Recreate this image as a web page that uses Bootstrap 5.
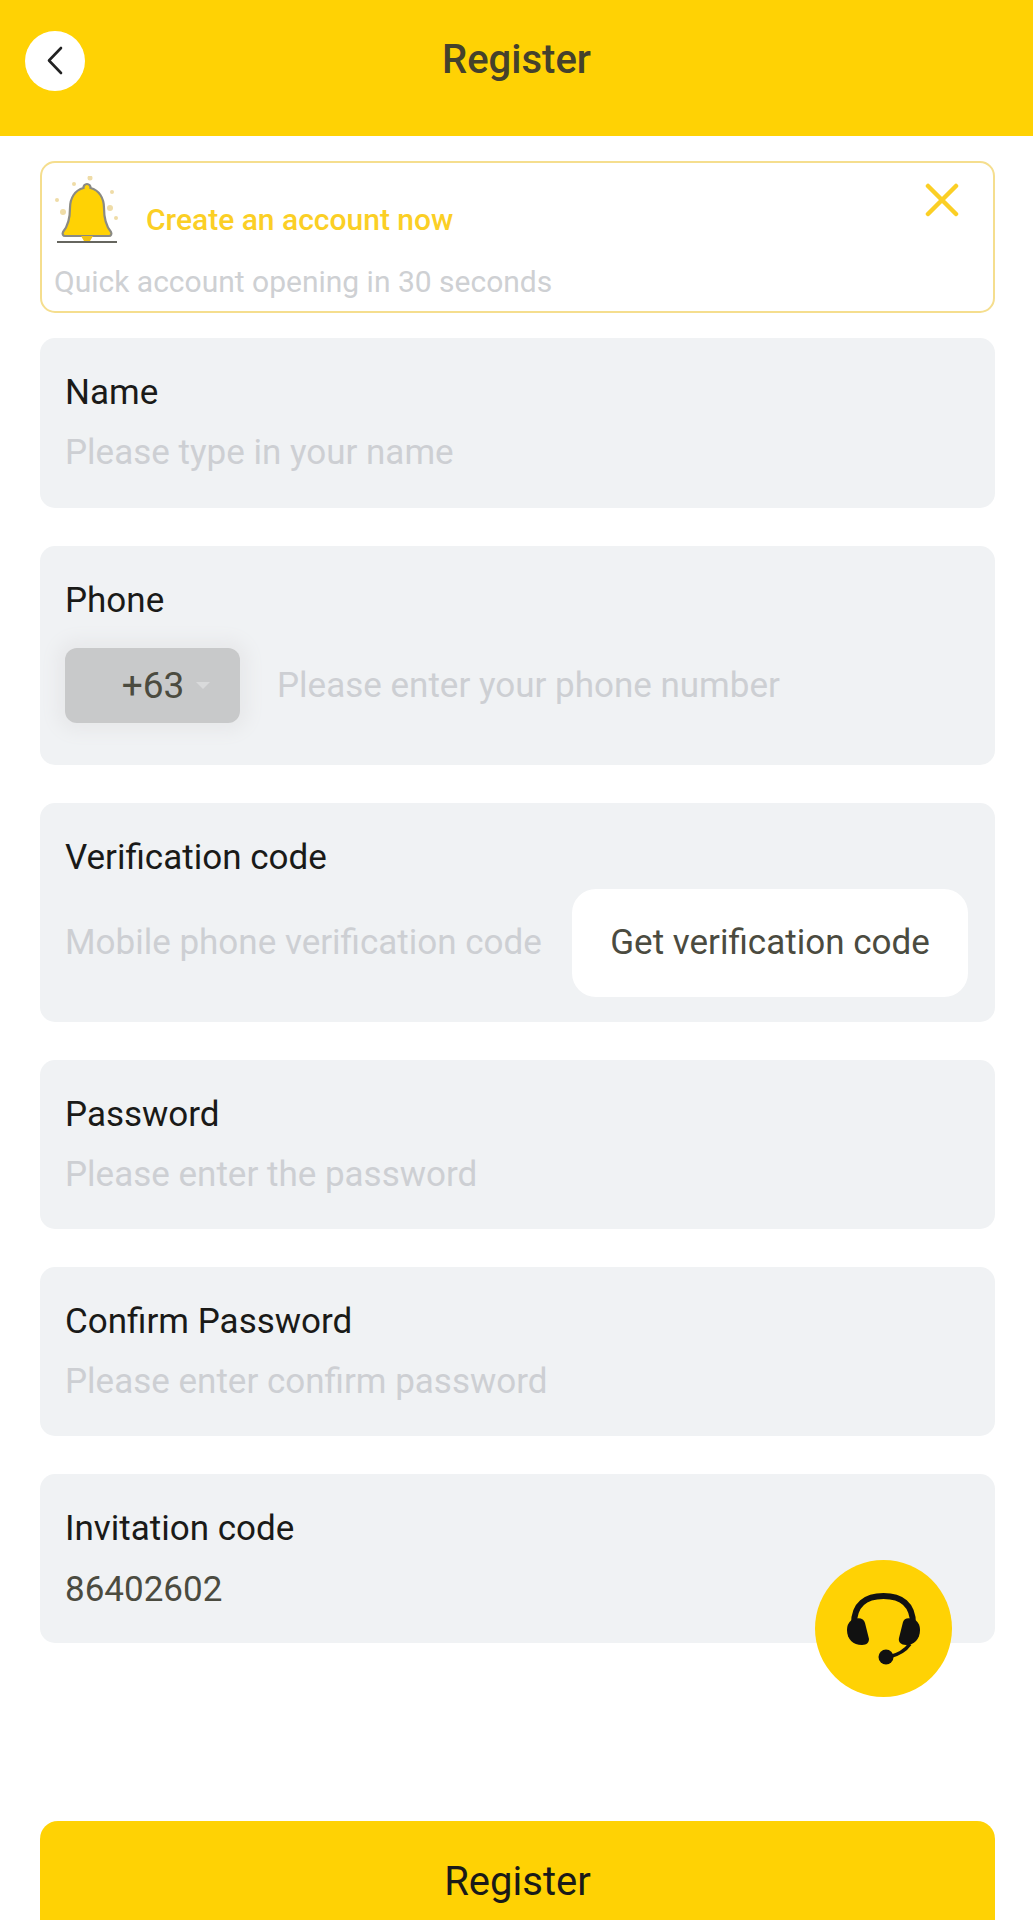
<!DOCTYPE html>
<html lang="en">
<head>
<meta charset="utf-8">
<title>Register</title>
<link rel="stylesheet" href="https://cdn.jsdelivr.net/npm/bootstrap@5.3.0/dist/css/bootstrap.min.css">
<style>
html, body { height: 100%; }
body { font-family: Roboto, "Liberation Sans", sans-serif; background: #fff; overflow: hidden; color: #111; }
.page-shell { height: 1920px; overflow: hidden; position: relative; }
.top-bar { height: 136px; background: #ffd204; }
.top-bar-title { font-size: 40px; font-weight: 500; color: #45412c; line-height: 1; margin-top: -17px; }
.back-dot { width: 60px; height: 60px; background: #fff; border-radius: 50%; left: 25px; top: 31px; }
.notice-box { height: 152px; margin: 25px 38px 0 40px; border: 2px solid #f5de8e; border-radius: 15px; position: relative; padding: 0 12px; }
.notice-row { height: 90px; }
.notice-title { font-size: 30px; font-weight: 500; color: #fbcf25; margin-top: 22px; margin-left: 26px; }
.notice-sub { font-size: 30px; color: #ced0d3; line-height: 34px; margin-top: 12px; }
.notice-close { position: absolute; right: 34px; top: 20px; }
.form-stack { margin: 25px 38px 0 40px; }
.field-box { background: #f0f2f4; border-radius: 15px; padding: 34px 25px 0; margin-bottom: 38px; }
.field-h1 { height: 170px; }
.field-h2 { height: 219px; }
.field-h3 { height: 169px; margin-bottom: 38px; }
.field-label { font-size: 35px; line-height: 40px; color: #1a1a18; padding-top: 1px; }
.field-hint { font-size: 35px; line-height: 40px; color: #cdcfd3; margin-top: 20px; }
.field-value { font-size: 35px; line-height: 40px; color: #4b4b40; margin-top: 21px; }
.phone-row { margin-top: 27px; }
.code-pill { width: 175px; height: 75px; background: #c8c9ca; border-radius: 12px; box-shadow: 0 0 16px 9px #e8e9eb; font-size: 37px; color: #4b4b40; padding-left: 27px; gap: 12px; }
.code-caret { width: 0; height: 0; border-left: 7px solid transparent; border-right: 7px solid transparent; border-top: 7px solid #d9dadb; }
.phone-hint { margin-left: 37px; }
.code-row { margin-top: 11px; }
.get-code { width: 396px; height: 108px; background: #fff; border-radius: 24px; font-size: 35px; color: #4b4b40; margin-right: 2px; border: 0; padding: 0; }
.help-fab { position: absolute; left: 815px; top: 1560px; width: 137px; height: 137px; background: #ffd204; border-radius: 50%; }
.submit-bar { position: absolute; left: 40px; right: 38px; top: 1821px; height: 130px; background: #ffd204; border-radius: 18px; font-size: 40px; color: #1a1a18; padding: 0 0 8px; }
</style>
</head>
<body>
<div class="page-shell">
  <header class="top-bar position-relative d-flex align-items-center justify-content-center">
    <div class="back-dot position-absolute d-flex align-items-center justify-content-center">
      <svg width="18" height="30" viewBox="0 0 18 30"><path d="M15 2 L3 14.500 L15 27" fill="none" stroke="#222" stroke-width="2.600" stroke-linecap="round" stroke-linejoin="round"/></svg>
    </div>
    <div class="top-bar-title">Register</div>
  </header>

  <section class="notice-box">
    <div class="notice-row d-flex align-items-center">
      <svg width="66" height="72" viewBox="0 0 66 72" class="flex-shrink-0 mt-2">
        <path d="M33 8a3.500 3.500 0 0 1 3.500 4C45 14 50 22 50 32c0 10 2 18 7 24c1 2 0 4-2 4H11c-2 0-3-2-2-4c5-6 7-14 7-24C16 22 21 14 29.500 12A3.500 3.500 0 0 1 33 8z" fill="#ffd204" stroke="#8a8a84" stroke-width="2.200"/>
        <path d="M27 60h12l-3 5h-6z" fill="#f4c20d"/>
        <path d="M3 66h60" stroke="#66665f" stroke-width="1.800"/>
        <g fill="#efdca7"><circle cx="20" cy="8" r="2"/><circle cx="36" cy="2" r="2.500"/><circle cx="3" cy="24" r="2"/><circle cx="58" cy="16" r="2"/><circle cx="62" cy="42" r="2"/><circle cx="9" cy="36" r="3"/><circle cx="56" cy="32" r="3"/></g>
      </svg>
      <div class="notice-title">Create an account now</div>
    </div>
    <div class="notice-sub">Quick account opening in 30 seconds</div>
    <svg class="notice-close" width="34" height="34" viewBox="0 0 34 34"><path d="M3 3 L31 31 M31 3 L3 31" stroke="#fbcf25" stroke-width="4.500" stroke-linecap="round"/></svg>
  </section>

  <main class="form-stack">
    <div class="field-box field-h1"><div class="field-label">Name</div><div class="field-hint">Please type in your name</div></div>
    <div class="field-box field-h2">
      <div class="field-label">Phone</div>
      <div class="d-flex align-items-center phone-row">
        <div class="code-pill d-flex align-items-center justify-content-center"><span>+63</span><span class="code-caret"></span></div>
        <div class="field-hint mt-0 phone-hint">Please enter your phone number</div>
      </div>
    </div>
    <div class="field-box field-h2">
      <div class="field-label">Verification code</div>
      <div class="d-flex align-items-center justify-content-between code-row">
        <div class="field-hint mt-0">Mobile phone verification code</div>
        <button type="button" class="btn get-code">Get verification code</button>
      </div>
    </div>
    <div class="field-box field-h3"><div class="field-label">Password</div><div class="field-hint">Please enter the password</div></div>
    <div class="field-box field-h3"><div class="field-label">Confirm Password</div><div class="field-hint">Please enter confirm password</div></div>
    <div class="field-box field-h3"><div class="field-label">Invitation code</div><div class="field-value">86402602</div></div>
  </main>

  <div class="help-fab d-flex align-items-center justify-content-center">
    <svg width="73" height="73" viewBox="0 0 73 73">
      <path d="M7 32C7 12 19 4 36.500 4S66 12 66 32" fill="none" stroke="#111" stroke-width="6"/>
      <path d="M7 27c6-2 10 0 11 4l4 16c0 3-2 6-7 6C6 53 0 47 0 38c0-5 2-9 7-11z" fill="#111"/>
      <path d="M66 27c-6-2-9 0-10 3l-4 16c-1 4 2 7 7 7 8 0 14-6 14-15 0-5-2-9-7-11z" fill="#111"/>
      <path d="M63 52C58 59 50 63 42 65" fill="none" stroke="#111" stroke-width="3.500"/>
      <circle cx="39" cy="65" r="7.500" fill="#111"/>
    </svg>
  </div>

  <button type="button" class="btn submit-bar">Register</button>
</div>
</body>
</html>
